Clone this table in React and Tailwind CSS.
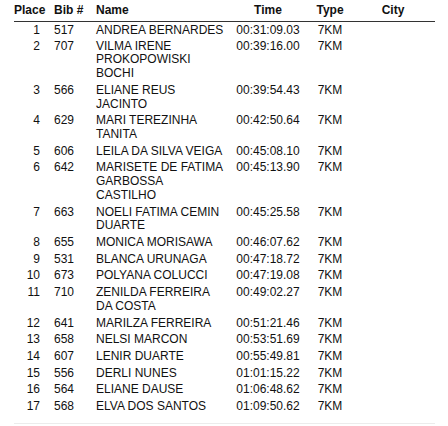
import React from 'react';

// Tableau des résultats 7KM — rendu type PDF
const results = [
  { place: 1, bib: 517, name: ['ANDREA BERNARDES'], time: '00:31:09.03', type: '7KM' },
  { place: 2, bib: 707, name: ['VILMA IRENE', 'PROKOPOWISKI', 'BOCHI'], time: '00:39:16.00', type: '7KM' },
  { place: 3, bib: 566, name: ['ELIANE REUS', 'JACINTO'], time: '00:39:54.43', type: '7KM' },
  { place: 4, bib: 629, name: ['MARI TEREZINHA', 'TANITA'], time: '00:42:50.64', type: '7KM' },
  { place: 5, bib: 606, name: ['LEILA DA SILVA VEIGA'], time: '00:45:08.10', type: '7KM' },
  { place: 6, bib: 642, name: ['MARISETE DE FATIMA', 'GARBOSSA', 'CASTILHO'], time: '00:45:13.90', type: '7KM' },
  { place: 7, bib: 663, name: ['NOELI FATIMA CEMIN', 'DUARTE'], time: '00:45:25.58', type: '7KM' },
  { place: 8, bib: 655, name: ['MONICA MORISAWA'], time: '00:46:07.62', type: '7KM' },
  { place: 9, bib: 531, name: ['BLANCA URUNAGA'], time: '00:47:18.72', type: '7KM' },
  { place: 10, bib: 673, name: ['POLYANA COLUCCI'], time: '00:47:19.08', type: '7KM' },
  { place: 11, bib: 710, name: ['ZENILDA FERREIRA', 'DA COSTA'], time: '00:49:02.27', type: '7KM' },
  { place: 12, bib: 641, name: ['MARILZA FERREIRA'], time: '00:51:21.46', type: '7KM' },
  { place: 13, bib: 658, name: ['NELSI MARCON'], time: '00:53:51.69', type: '7KM' },
  { place: 14, bib: 607, name: ['LENIR DUARTE'], time: '00:55:49.81', type: '7KM' },
  { place: 15, bib: 556, name: ['DERLI NUNES'], time: '01:01:15.22', type: '7KM' },
  { place: 16, bib: 564, name: ['ELIANE DAUSE'], time: '01:06:48.62', type: '7KM' },
  { place: 17, bib: 568, name: ['ELVA DOS SANTOS'], time: '01:09:50.62', type: '7KM' },
];

const cols = 'grid grid-cols-[40px_42px_134px_76px_48px_81px]';

export default function App() {
  return (
    <div className="min-h-screen w-full bg-white text-[#111] [font-family:'Liberation_Sans',Arial,sans-serif] text-[12px] leading-[13.8px]">
      <div className="ml-[14px] w-[421px]">
        {/* en-tête */}
        <div className={`${cols} pt-[4.2px] pb-[2.7px] border-b border-[#333] font-bold`}>
          <div className="text-left">Place</div>
          <div className="text-left">Bib #</div>
          <div className="text-left">Name</div>
          <div className="text-center">Time</div>
          <div className="text-center">Type</div>
          <div className="text-center pr-[3px]">City</div>
        </div>

        {results.map((r, i) => (
          <div
            key={r.place}
            className={`${cols} ${i === 0 ? 'pt-[2.6px] pb-0' : 'py-[1.45px]'}`}
          >
            <div className="text-right pr-[14px]">{r.place}</div>
            <div>{r.bib}</div>
            <div>
              {r.name.map((line) => (
                <div key={line} className="whitespace-nowrap">{line}</div>
              ))}
            </div>
            <div className="text-center">{r.time}</div>
            <div className="text-center">{r.type}</div>
            <div></div>
          </div>
        ))}

        <div className="mt-[8px] border-t border-[#ececec]" />
      </div>
    </div>
  );
}
